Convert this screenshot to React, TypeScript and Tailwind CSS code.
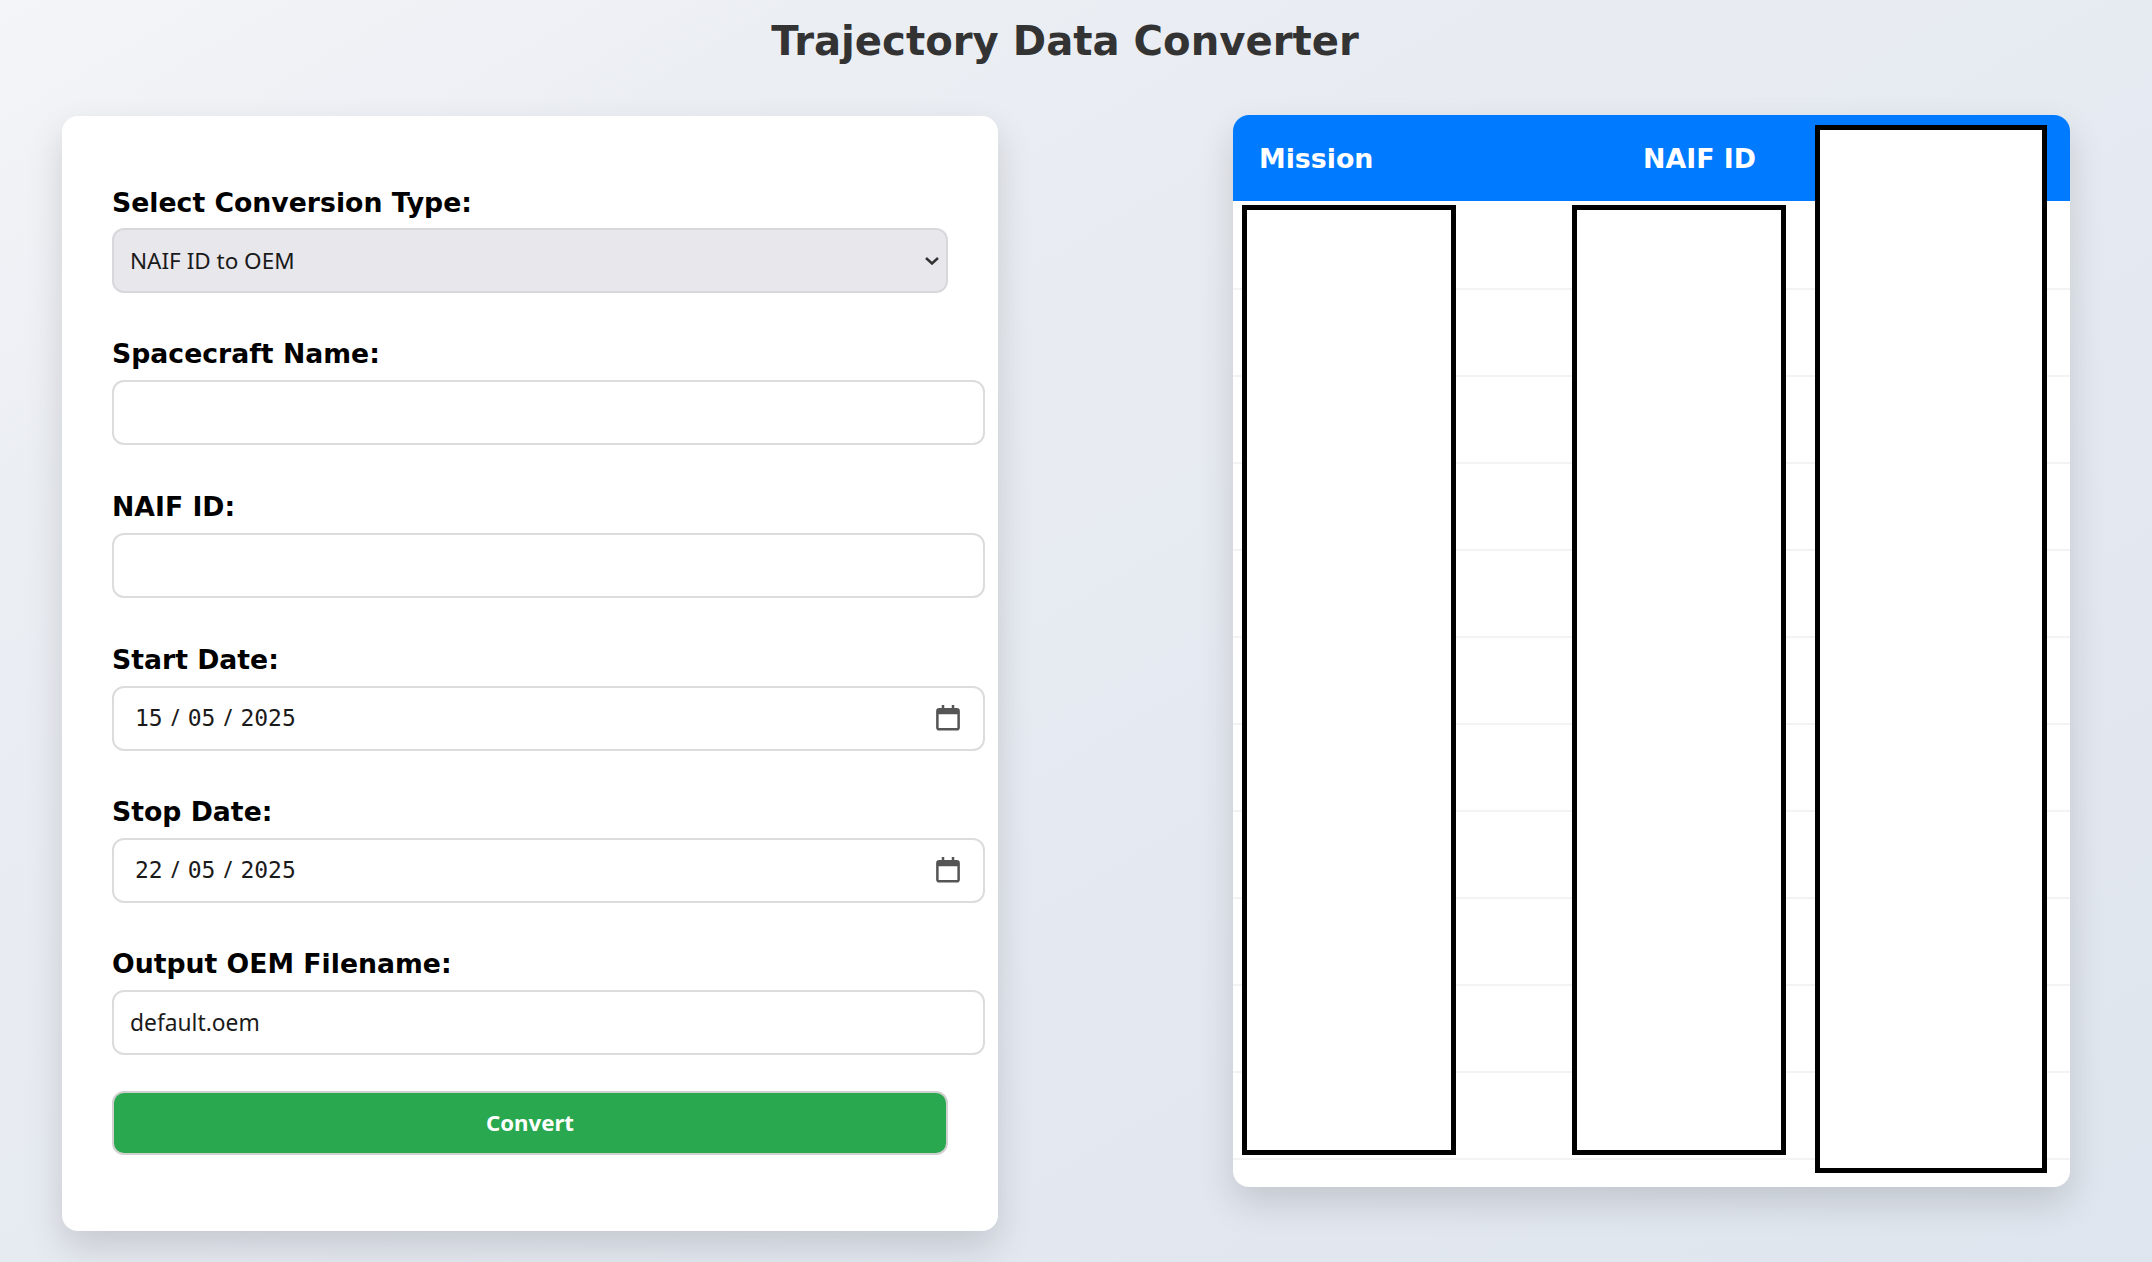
const rows = Array.from({ length: 11 });

const labelClass = "block text-[26.7px] leading-[40px] font-bold text-black font-['DejaVu_Sans',sans-serif]";
const inputClass =
  "h-[65px] w-[873px] rounded-[12px] border-2 border-[#dcdcdc] bg-white px-[16px] text-[22.8px] text-[#1a1a1a] font-['Noto_Sans',sans-serif] outline-none";

const CalendarIcon = () => (
  <svg width="30" height="30" viewBox="0 0 24 24" className="absolute right-[20px] top-[15px]">
    <path
      fill="#555"
      d="M7 1.5h2V4h6V1.5h2V4h2a2.5 2.5 0 0 1 2.5 2.5v13A2.5 2.5 0 0 1 19 22H5a2.5 2.5 0 0 1-2.5-2.5v-13A2.5 2.5 0 0 1 5 4h2V1.5zM4.5 9v10.5A.5.5 0 0 0 5 20h14a.5.5 0 0 0 .5-.5V9h-15z"
    />
  </svg>
);

const DateField = ({ day }: { day: string }) => (
  <div className={`${inputClass} relative flex items-center pl-[21px]`}>
    <span className="font-['DejaVu_Sans_Mono',monospace] text-[23px]">{day}</span>
    <span className="w-[25px] text-center">/</span>
    <span className="font-['DejaVu_Sans_Mono',monospace] text-[23px]">05</span>
    <span className="w-[25px] text-center">/</span>
    <span className="font-['DejaVu_Sans_Mono',monospace] text-[23px]">2025</span>
    <CalendarIcon />
  </div>
);

export default function App() {
  return (
    <div className="h-[1262px] overflow-hidden bg-[linear-gradient(to_bottom_right,#f3f5f8,#ebeef3_20%,#e6eaf1_50%,#dfe5ee)] font-['DejaVu_Sans',sans-serif]">
      <h1 className="pr-[22px] pt-[14px] text-center text-[40.2px] leading-[55px] font-bold text-[#333]">
        Trajectory Data Converter
      </h1>

      <div className="mt-[47px] flex items-start pl-[62px]">
        {/* Form */}
        <div className="h-[1115px] w-[936px] rounded-[16px] bg-white px-[50px] pt-[67px] shadow-[0_16px_36px_rgba(0,0,0,0.14)]">
          <label className={labelClass}>Select Conversion Type:</label>
          <div className="relative mt-[5px] w-[836px]">
            <select className="h-[65px] w-full appearance-none rounded-[12px] border-2 border-[#d8d8dc] bg-[#e8e7ec] pl-[16px] text-[22.5px] text-[#1a1a1a] font-['Noto_Sans',sans-serif]">
              <option>NAIF ID to OEM</option>
            </select>
            <svg width="14" height="8" viewBox="0 0 14 8" className="absolute right-[9px] top-[29px]">
              <path d="M1 1l6 5.5L13 1" fill="none" stroke="#333" strokeWidth="2.5" />
            </svg>
          </div>

          <label className={`${labelClass} mt-[41px]`}>Spacecraft Name:</label>
          <input className={`${inputClass} mt-[6px] block`} />

          <label className={`${labelClass} mt-[42px]`}>NAIF ID:</label>
          <input className={`${inputClass} mt-[6px] block`} />

          <label className={`${labelClass} mt-[42px]`}>Start Date:</label>
          <div className="mt-[6px]">
            <DateField day="15" />
          </div>

          <label className={`${labelClass} mt-[41px]`}>Stop Date:</label>
          <div className="mt-[6px]">
            <DateField day="22" />
          </div>

          <label className={`${labelClass} mt-[41px]`}>Output OEM Filename:</label>
          <input className={`${inputClass} mt-[6px] block`} defaultValue="default.oem" />

          <button className="mt-[36px] h-[64px] w-[836px] rounded-[12px] border-2 border-[#d0d0d0] bg-[#2aa84f] text-[22.2px] font-bold text-white font-['Noto_Sans',sans-serif]">
            Convert
          </button>
        </div>

        {/* Mission table */}
        <div className="relative ml-[235px] -mt-[1px] h-[1072px] w-[837px] rounded-[16px] bg-white shadow-[0_16px_36px_rgba(0,0,0,0.14)]">
          <div className="flex h-[86px] items-center rounded-t-[16px] bg-[#007bff] pl-[26px] pt-[2px] text-[26.8px] font-bold text-white">
            <span className="w-[384px]">Mission</span>
            <span>NAIF ID</span>
          </div>
          <div className="pt-[2px]">
            {rows.map((_, i) => (
              <div key={i} className="h-[87px] border-b-2 border-[#f3f3f3]" />
            ))}
          </div>

          <div className="absolute left-[9px] top-[90px] h-[950px] w-[214px] border-[5px] border-black bg-white" />
          <div className="absolute left-[339px] top-[90px] h-[950px] w-[214px] border-[5px] border-black bg-white" />
          <div className="absolute left-[582px] top-[10px] h-[1048px] w-[232px] border-[5px] border-black bg-white" />
        </div>
      </div>
    </div>
  );
}
